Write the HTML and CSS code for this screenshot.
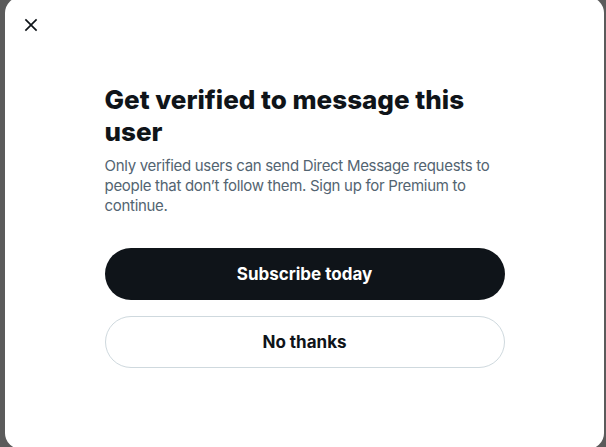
FILE: index.html
```html
<!DOCTYPE html>
<html lang="en">
<head>
<meta charset="utf-8">
<title>Get verified</title>
<link rel="stylesheet" href="styles.css">
</head>
<body>
<div class="backdrop">
  <div class="modal" role="dialog">
    <div class="modal-header">
      <button class="close" aria-label="Close">
        <svg viewBox="0 0 24 24" width="20" height="20" aria-hidden="true"><path d="M10.59 12L4.54 5.96l1.42-1.42L12 10.59l6.04-6.05 1.42 1.42L13.41 12l6.05 6.04-1.42 1.42L12 13.41l-6.04 6.05-1.42-1.42L10.59 12z"/></svg>
      </button>
    </div>
    <div class="content">
      <h1 class="title">Get verified to message this user</h1>
      <p class="desc">Only verified users can send Direct Message requests to people that don’t follow them. Sign up for Premium to continue.</p>
      <div class="actions">
        <button class="btn btn-primary">Subscribe today</button>
        <button class="btn btn-outline">No thanks</button>
      </div>
    </div>
  </div>
</div>
</body>
</html>
```
FILE: styles.css
```css
html, body {
  margin: 0;
  padding: 0;
  height: 100%;
  overflow: hidden;
}
body {
  background: #5b5b5b;
  font-family: "Inter", "Roboto", "Liberation Sans", sans-serif;
  color: #0f1419;
}
.backdrop {
  display: flex;
  padding-left: 5px;
}
.modal {
  width: 599px;
  height: 452px;
  margin-top: -3px;
  background: #fff;
  border-radius: 16px;
  display: flex;
  flex-direction: column;
}
.modal-header {
  height: 56px;
  padding: 0 0 0 16px;
  display: flex;
  align-items: center;
}
.close {
  width: 20px;
  height: 20px;
  padding: 0;
  border: none;
  background: transparent;
  display: flex;
  cursor: pointer;
}
.close svg {
  fill: #0f1419;
}
.content {
  width: 400px;
  margin: 0 auto;
  padding-top: 31px;
}
.title {
  margin: 0;
  font-size: 26px;
  line-height: 32px;
  font-weight: 800;
  letter-spacing: 0;
}
.desc {
  margin: 8px 0 0;
  font-size: 15px;
  line-height: 20px;
  color: #536471;
  letter-spacing: -0.3px;
}
.actions {
  margin-top: 32px;
  display: flex;
  flex-direction: column;
  gap: 16px;
}
.btn {
  height: 52px;
  border-radius: 26px;
  font-family: inherit;
  font-size: 17px;
  font-weight: 700;
  cursor: pointer;
}
.btn-primary {
  background: #0f1419;
  color: #fff;
  border: none;
}
.btn-outline {
  background: #fff;
  color: #0f1419;
  border: 1px solid #cfd9de;
}
```
